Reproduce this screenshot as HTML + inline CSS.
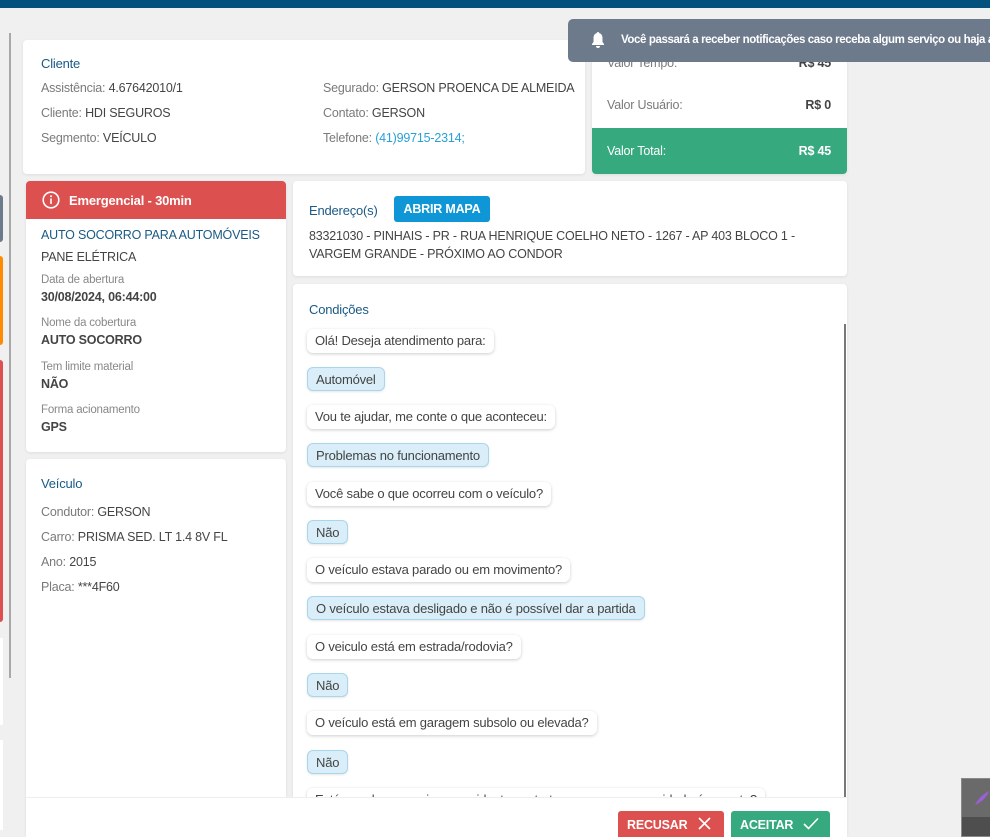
<!DOCTYPE html>
<html><head><meta charset="utf-8"><style>
*{box-sizing:border-box;margin:0;padding:0}
html,body{width:990px;height:837px;overflow:hidden}
body{background:#f0f0f0;font-family:"Liberation Sans",sans-serif;font-size:12.5px;color:#444;position:relative;letter-spacing:-0.2px}
.a{position:absolute}
.card{position:absolute;background:#fff;border-radius:4px;box-shadow:0 1px 3px rgba(0,0,0,.08)}
.t{color:#1a5a85;font-size:13px}
.l{color:#7a7a7a}
.b{position:absolute;left:14px;height:24px;line-height:24px;padding:0 8px;border-radius:6px;background:#fff;box-shadow:0 1px 3px rgba(0,0,0,.2);white-space:nowrap;font-size:13px;color:#444}
.u{background:#d9eef8;border:1px solid #a9d6ea;box-shadow:0 1px 2px rgba(0,0,0,.1)}
.sm{font-size:11.5px;color:#888}
.bd{font-weight:bold;color:#444;font-size:12.5px}
</style></head><body>
<div class="a" style="left:0;top:0;width:990px;height:8px;background:#03527e"></div>
<div class="a" style="left:9px;top:33px;width:2px;height:645px;background:#a8a8a8"></div>
<div class="a" style="left:0;top:195px;width:3px;height:47px;background:#6d7a8c;border-radius:0 3px 3px 0"></div>
<div class="a" style="left:0;top:256px;width:3px;height:89px;background:#ff8c00;border-radius:0 3px 3px 0"></div>
<div class="a" style="left:0;top:360px;width:3px;height:262px;background:#dc5050;border-radius:0 3px 3px 0"></div>
<div class="a" style="left:0;top:638px;width:3px;height:87px;background:#fff"></div>
<div class="a" style="left:0;top:740px;width:3px;height:90px;background:#fff"></div>

<div class="card" style="left:23px;top:40px;width:562px;height:134px">
 <div class="a t" style="left:18px;top:16px">Cliente</div>
 <div class="a" style="left:18px;top:41px"><span class="l">Assistência:</span> 4.67642010/1</div>
 <div class="a" style="left:18px;top:66px"><span class="l">Cliente:</span> HDI SEGUROS</div>
 <div class="a" style="left:18px;top:91px"><span class="l">Segmento:</span> VEÍCULO</div>
 <div class="a" style="left:300px;top:41px"><span class="l">Segurado:</span> GERSON PROENCA DE ALMEIDA</div>
 <div class="a" style="left:300px;top:66px"><span class="l">Contato:</span> GERSON</div>
 <div class="a" style="left:300px;top:91px"><span class="l">Telefone:</span> <span style="color:#2a9fd8">(41)99715-2314;</span></div>
</div>

<div class="card" style="left:592px;top:40px;width:255px;height:134px;overflow:hidden">
 <div class="a l" style="left:15px;top:16px">Valor Tempo:</div><div class="a bd" style="right:16px;top:16px">R$ 45</div>
 <div class="a l" style="left:15px;top:58px">Valor Usuário:</div><div class="a bd" style="right:16px;top:58px">R$ 0</div>
 <div class="a" style="left:0;top:88px;width:255px;height:46px;background:#36aa7e;color:#fff">
  <div class="a" style="left:15px;top:16px">Valor Total:</div><div class="a" style="right:16px;top:16px;font-weight:bold">R$ 45</div></div>
</div>

<div class="a" style="left:568px;top:19px;width:422px;height:43px;background:#6d7a8c;border-radius:5px 0 0 5px;color:#fff;font-size:11.5px;overflow:hidden">
 <svg class="a" style="left:22px;top:12px" width="16" height="18" viewBox="0 0 16 18"><path d="M8 1c-.8 0-1.2.5-1.2 1.1C4.6 2.7 3.5 4.5 3.5 7v4L2 13v1h12v-1l-1.5-2V7c0-2.5-1.1-4.3-3.3-4.9C9.2 1.5 8.8 1 8 1zM6 15a2 2 0 0 0 4 0z" fill="#fff"/></svg>
 <div class="a" style="left:53px;top:15px;white-space:nowrap;font-weight:bold;letter-spacing:-0.4px">Você passará a receber notificações caso receba algum serviço ou haja alteração</div>
</div>

<div class="card" style="left:26px;top:181px;width:260px;height:271px;overflow:hidden">
 <div class="a" style="left:0;top:0;width:260px;height:38px;background:#dc5050;color:#fff;font-weight:bold;font-size:13px">
  <svg class="a" style="left:16px;top:10px" width="18" height="18" viewBox="0 0 18 18"><circle cx="9" cy="9" r="7.8" fill="none" stroke="#fff" stroke-width="1.6"/><rect x="8.2" y="7.5" width="1.6" height="5.5" fill="#fff"/><circle cx="9" cy="5.2" r="1" fill="#fff"/></svg>
  <div class="a" style="left:43px;top:12px">Emergencial - 30min</div></div>
 <div class="a t" style="left:15px;top:47px;font-size:12.5px">AUTO SOCORRO PARA AUTOMÓVEIS</div>
 <div class="a" style="left:15px;top:69px">PANE ELÉTRICA</div>
 <div class="a sm" style="left:15px;top:93px">Data de abertura</div><div class="a bd" style="left:15px;top:109px">30/08/2024, 06:44:00</div>
 <div class="a sm" style="left:15px;top:136px">Nome da cobertura</div><div class="a bd" style="left:15px;top:152px">AUTO SOCORRO</div>
 <div class="a sm" style="left:15px;top:180px">Tem limite material</div><div class="a bd" style="left:15px;top:196px">NÃO</div>
 <div class="a sm" style="left:15px;top:223px">Forma acionamento</div><div class="a bd" style="left:15px;top:239px">GPS</div>
</div>

<div class="card" style="left:26px;top:459px;width:260px;height:378px">
 <div class="a t" style="left:15px;top:17px">Veículo</div>
 <div class="a" style="left:15px;top:46px"><span class="l">Condutor:</span> GERSON</div>
 <div class="a" style="left:15px;top:71px"><span class="l">Carro:</span> PRISMA SED. LT 1.4 8V FL</div>
 <div class="a" style="left:15px;top:96px"><span class="l">Ano:</span> 2015</div>
 <div class="a" style="left:15px;top:121px"><span class="l">Placa:</span> ***4F60</div>
</div>

<div class="card" style="left:293px;top:181px;width:554px;height:95px">
 <div class="a t" style="left:16px;top:22px">Endereço(s)</div>
 <div class="a" style="left:101px;top:15px;width:96px;height:26px;background:#0f96d6;border-radius:3px;color:#fff;font-weight:bold;font-size:12.5px;text-align:center;line-height:26px">ABRIR MAPA</div>
 <div class="a" style="left:16px;top:46px;line-height:18px;width:520px">83321030 - PINHAIS - PR - RUA HENRIQUE COELHO NETO - 1267 - AP 403 BLOCO 1 -<br>VARGEM GRANDE - PRÓXIMO AO CONDOR</div>
</div>

<div class="card" style="left:293px;top:284px;width:554px;height:553px;overflow:hidden">
 <div class="a t" style="left:16px;top:18px">Condições</div>
 <div class="a" style="left:551px;top:40px;width:2px;height:520px;background:#777"></div>
 <div class="b" style="top:45px">Olá! Deseja atendimento para:</div>
 <div class="b u" style="top:83px">Automóvel</div>
 <div class="b" style="top:121px">Vou te ajudar, me conte o que aconteceu:</div>
 <div class="b u" style="top:159px">Problemas no funcionamento</div>
 <div class="b" style="top:198px">Você sabe o que ocorreu com o veículo?</div>
 <div class="b u" style="top:236px">Não</div>
 <div class="b" style="top:274px">O veículo estava parado ou em movimento?</div>
 <div class="b u" style="top:312px">O veículo estava desligado e não é possível dar a partida</div>
 <div class="b" style="top:351px">O veiculo está em estrada/rodovia?</div>
 <div class="b u" style="top:389px">Não</div>
 <div class="b" style="top:427px">O veículo está em garagem subsolo ou elevada?</div>
 <div class="b u" style="top:466px">Não</div>
 <div class="b" style="top:504px">Está em algum serviço ou evidente contratempo que a necessidade é urgente?</div>
</div>

<div class="a" style="left:26px;top:797px;width:821px;height:40px;background:#fff;border-top:1px solid #eee"></div>
<div class="a" style="left:618px;top:811px;width:106px;height:26px;background:#dc5050;border-radius:3px 3px 0 0;color:#fff;font-weight:bold;font-size:12.5px">
 <div class="a" style="left:9px;top:7px">RECUSAR</div>
 <svg class="a" style="left:80px;top:6px" width="13" height="13" viewBox="0 0 13 13"><path d="M1 1L12 12M12 1L1 12" stroke="#fff" stroke-width="1.6"/></svg></div>
<div class="a" style="left:731px;top:811px;width:99px;height:26px;background:#36aa7e;border-radius:3px 3px 0 0;color:#fff;font-weight:bold;font-size:12.5px">
 <div class="a" style="left:9px;top:7px">ACEITAR</div>
 <svg class="a" style="left:72px;top:6px" width="16" height="13" viewBox="0 0 16 13"><path d="M1 7L5.5 11.5L15 1.5" fill="none" stroke="#fff" stroke-width="1.6"/></svg></div>

<div class="a" style="left:961px;top:778px;width:29px;height:59px;background:#4e4e4e;border:1px solid #888;border-right:none;overflow:hidden">
 <div class="a" style="left:0;top:0;width:28px;height:38px;background:#6a6a6a"></div>
 <svg class="a" style="left:12px;top:11px" width="16" height="16" viewBox="0 0 16 16"><path d="M1 15C4 9 9 4 15 1C13 7 8 12 1 15Z" fill="#9b5fd6"/></svg>
</div>
</body></html>
